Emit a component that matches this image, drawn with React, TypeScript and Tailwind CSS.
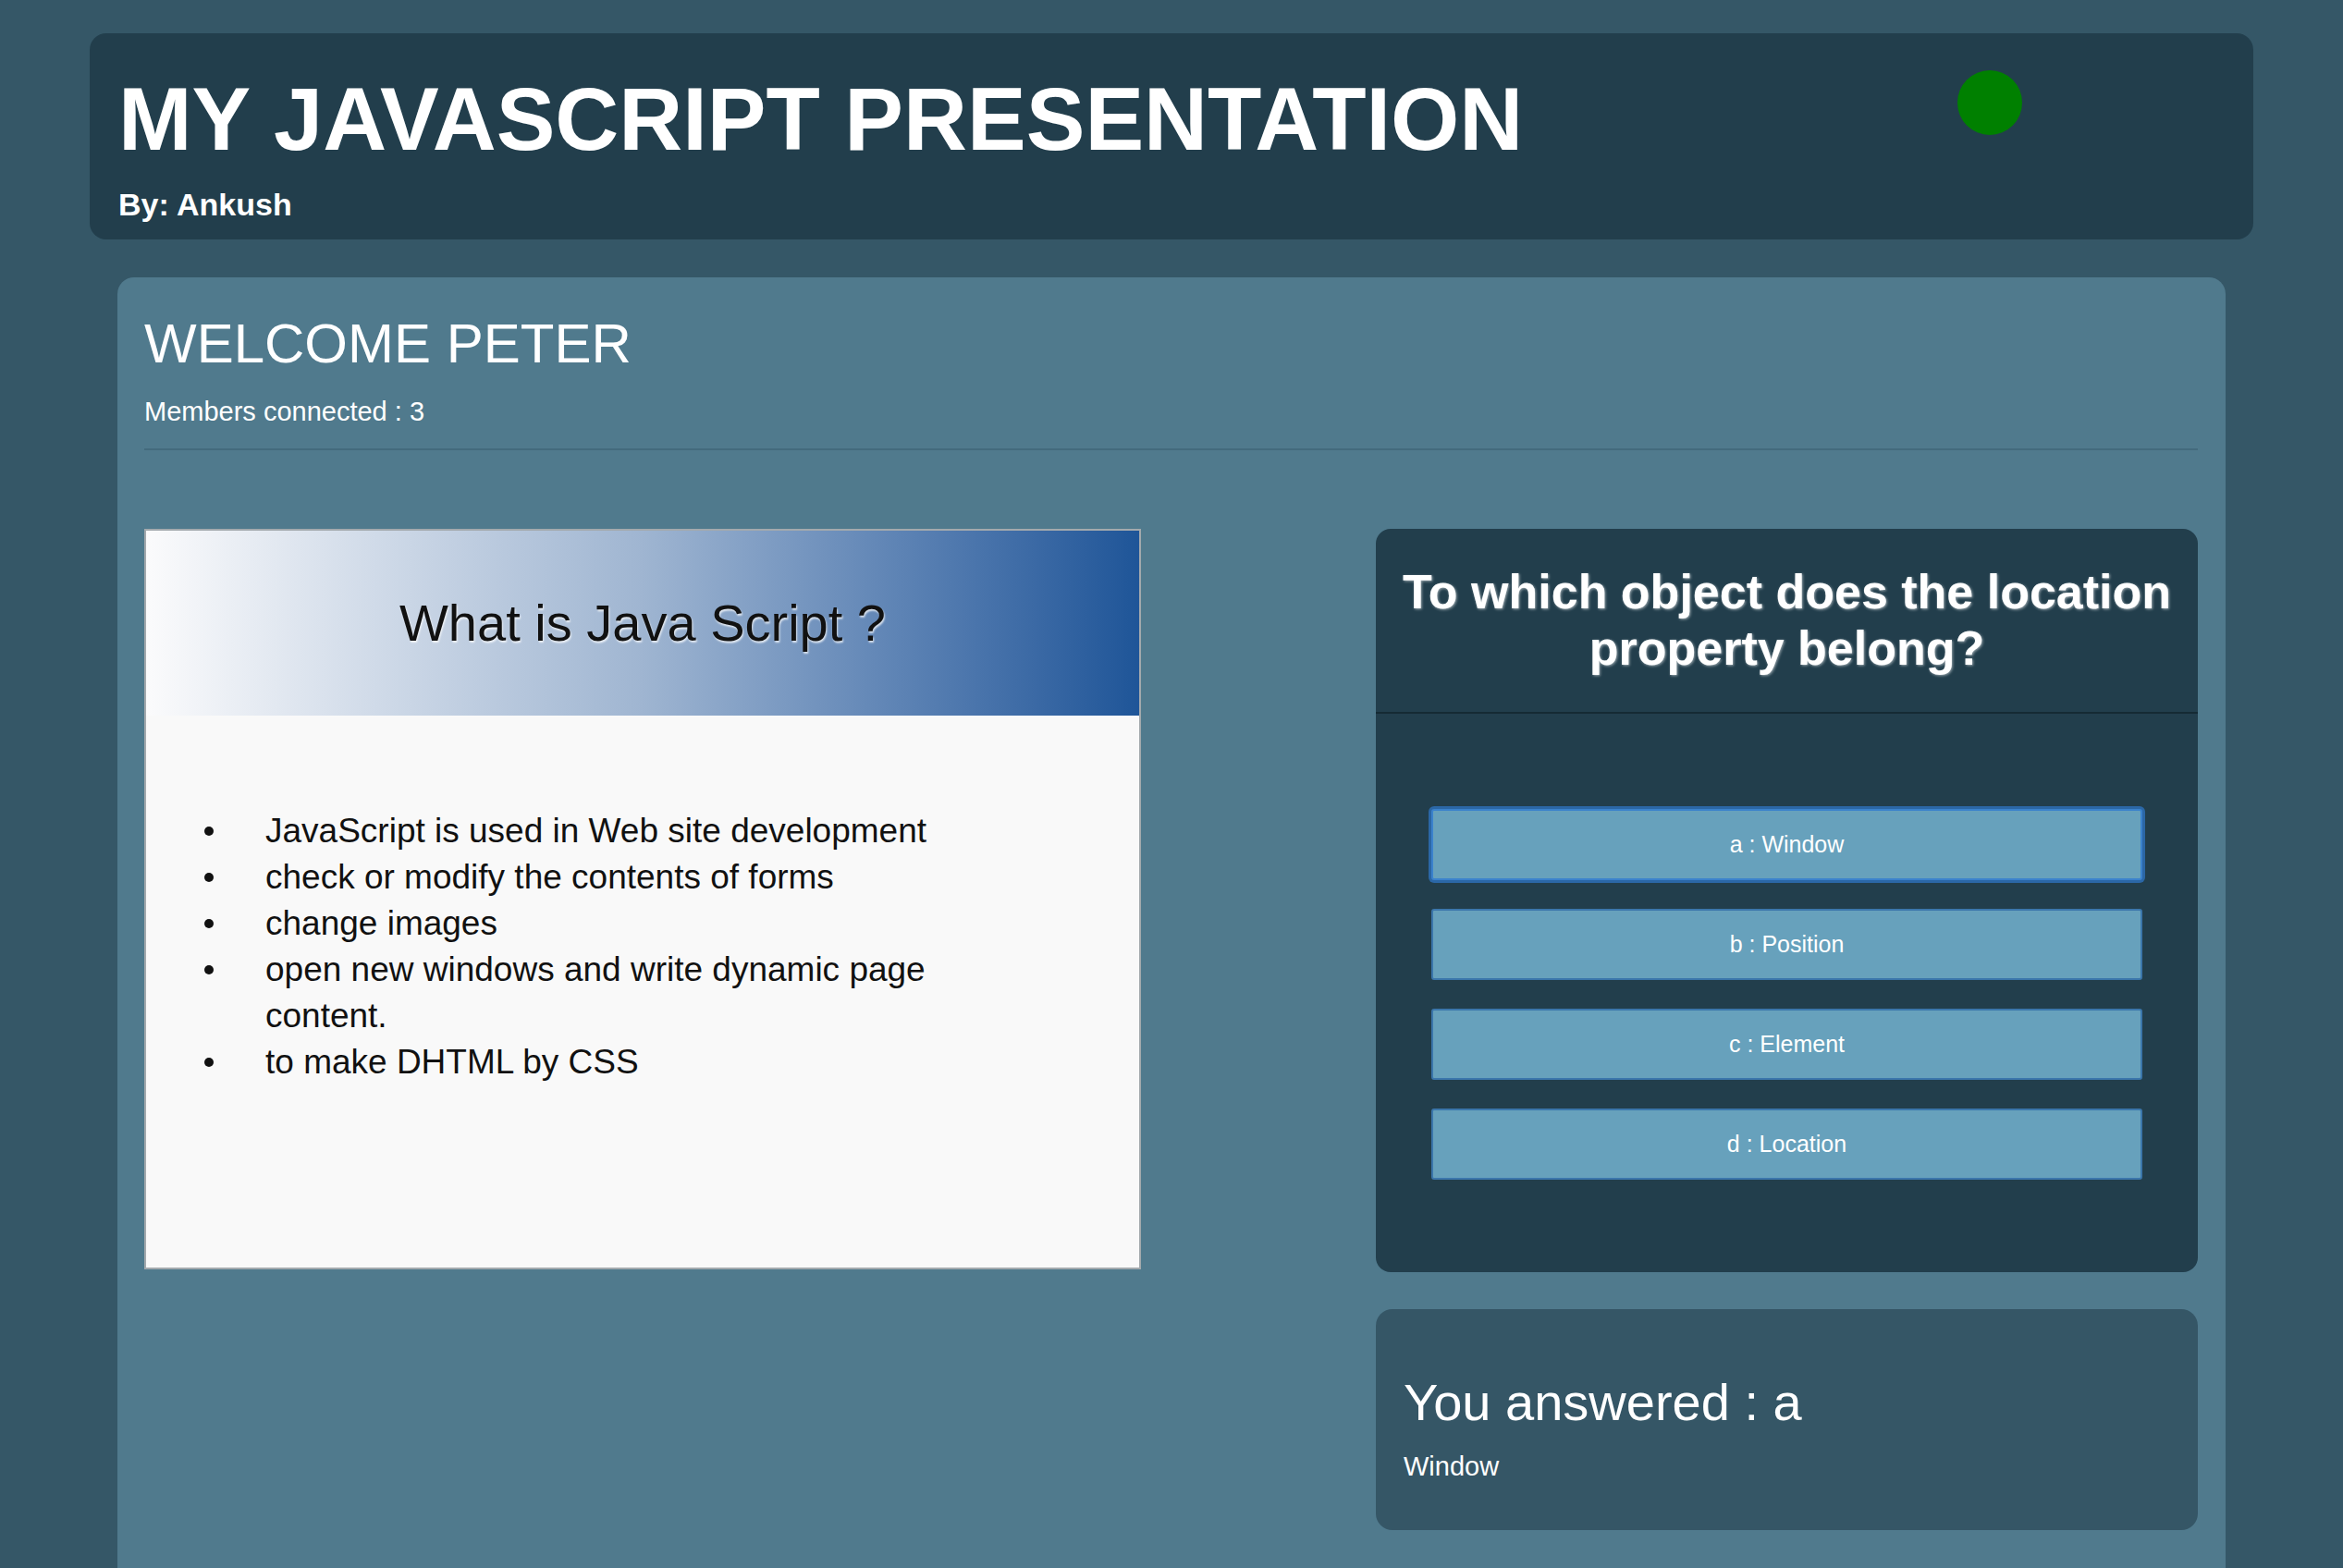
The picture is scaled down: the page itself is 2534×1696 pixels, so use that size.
import React from 'react';

const bullets = [
    'JavaScript is used in Web site development',
    'check or modify the contents of forms',
    'change images',
    'open new windows and write dynamic page content.',
    'to make DHTML by CSS',
];

const answers = [
    { key: 'a', label: 'Window' },
    { key: 'b', label: 'Position' },
    { key: 'c', label: 'Element' },
    { key: 'd', label: 'Location' },
];

const Slide: React.FC = () => (
    <div className="w-[1078px] h-[801px] border-2 border-[#a3a9ad] bg-[#f9f9f9] flex flex-col">
        <div className="h-[200px] flex items-center justify-center bg-gradient-to-r from-[#fbfbfc] via-[#9fb5d1] to-[#1e5598]">
            <h2 className="text-[56px] leading-none text-[#111] [text-shadow:1px_2px_2px_rgba(255,255,255,0.75)]">
                What is Java Script ?
            </h2>
        </div>
        <ul className="pt-[100px] pl-[63px]">
            {bullets.map((b, i) => (
                <li key={i} className="flex items-start">
                    <div className="w-[66px] shrink-0 h-[50px] flex items-center">
                        <span className="w-[10px] h-[10px] rounded-full bg-[#111]" />
                    </div>
                    <span className="w-[750px] text-[37px] leading-[50px] text-[#111]">{b}</span>
                </li>
            ))}
        </ul>
    </div>
);

const Quiz: React.FC = () => (
    <div className="w-[889px] flex flex-col">
        <div className="h-[804px] rounded-[16px] bg-[#223e4c] flex flex-col">
            <div className="h-[200px] flex items-center justify-center px-4 border-b-2 border-[#152a34]">
                <h3 className="text-center font-bold text-[52px] leading-[61px] text-white [text-shadow:1px_1px_3px_rgba(255,255,255,0.55)]">
                    To which object does the location property belong?
                </h3>
            </div>
            <div className="flex flex-col gap-[31px] pt-[103px] pb-[97px] px-[60px]">
                {answers.map((a, i) => (
                    <button
                        key={a.key}
                        className={`h-[77px] w-full bg-[#67a1bc] text-white text-[25px] rounded-[3px] border-2 ${i === 0 ? 'border-[#3b82cc] shadow-[0_0_0_3px_#2b67a6]' : 'border-[#3b76ab]'
                            }`}
                    >
                        {a.key} : {a.label}
                    </button>
                ))}
            </div>
        </div>
        <div className="mt-[40px] rounded-[18px] bg-[#355666] pt-[73px] pb-[54px] px-[30px] text-white">
            <div className="text-[56px] leading-none">You answered : a</div>
            <div className="mt-[27px] text-[29px] leading-none">Window</div>
        </div>
    </div>
);

export default function App() {
    return (
        <div className="min-h-screen bg-[#355767] px-[97px] pt-[36px] font-['Liberation_Sans',Arial,sans-serif]">
            <header className="h-[223px] rounded-[18px] bg-[#223e4c] flex items-start justify-between pl-[31px]">
                <div className="pt-[46px]">
                    <h1 className="text-[95.5px] leading-none font-bold text-white">MY JAVASCRIPT PRESENTATION</h1>
                    <p className="mt-[26px] text-[34px] leading-none font-bold text-white">By: Ankush</p>
                </div>
                <div className="mt-[40px] mr-[250px] w-[70px] h-[70px] rounded-full bg-[#008000]" />
            </header>

            <main className="mt-[41px] mx-[30px] rounded-t-[18px] bg-[#507a8d] pl-[29px] pr-[30px] pt-[42px] pb-[60px]">
                <h2 className="text-[60px] leading-none text-white">WELCOME PETER</h2>
                <p className="mt-[29px] text-[29px] leading-none text-white">Members connected : 3</p>
                <div className="mt-[25px] h-[2px] bg-[#436b7d]" />
                <div className="mt-[85px] flex justify-between items-start">
                    <Slide />
                    <Quiz />
                </div>
            </main>
        </div>
    );
}
